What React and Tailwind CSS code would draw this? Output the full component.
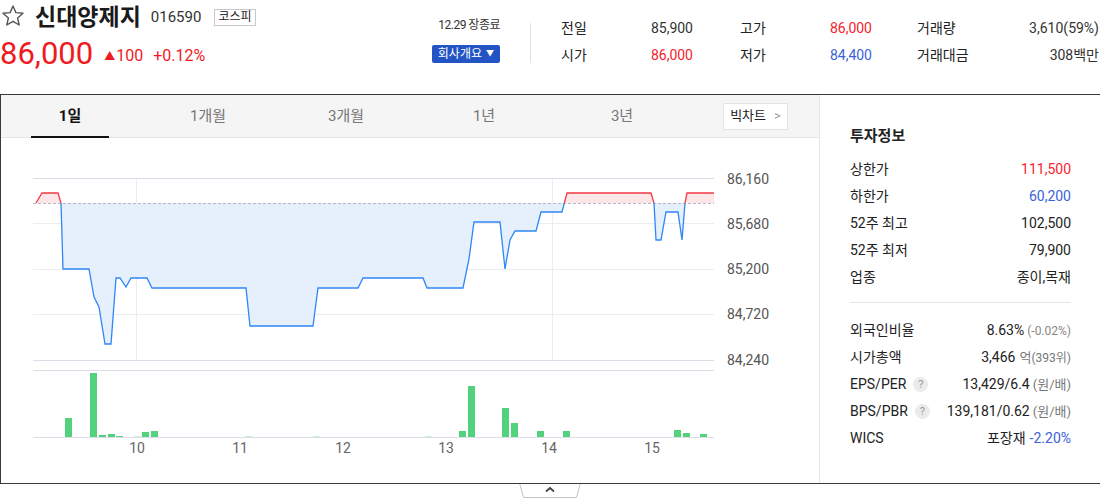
import React from "react";

const F = { fontFamily: 'Roboto, "Noto Sans CJK KR", sans-serif' };

const pts = [
  [36, 203], [42, 193], [58, 193], [61, 203], [63, 269], [89, 269], [94, 297], [99, 307], [105, 344], [111, 344],
  [116, 278], [120, 278], [126, 287], [131, 278], [147, 278], [152, 288], [246, 288], [250, 326], [313, 326],
  [318, 288], [358, 288], [363, 278], [423, 278], [427, 288], [463, 288], [469, 259], [474, 222], [500, 222],
  [505, 269], [510, 240], [515, 231], [536, 231], [541, 212], [562, 212], [567, 193], [651, 193], [654, 203],
  [656, 240], [661, 240], [666, 212], [678, 212], [682, 240], [685, 203], [687, 193], [714, 193],
];
const line = pts.map((p) => p.join(",")).join(" ");
const area = `36,203 ${line} 714,203`;

const bars = [
  [65, 418], [90, 373], [99, 435], [108, 434], [116, 436], [142, 432], [151, 431],
  [459, 431], [468, 386], [502, 408], [511, 423], [537, 431], [563, 431], [674, 430], [683, 433], [700, 434],
];
const faint = [134, 245, 313, 425];

const priceLabels = [["86,160", 179], ["85,680", 224], ["85,200", 269], ["84,720", 314], ["84,240", 360]];
const timeLabels = [["10", 137], ["11", 240], ["12", 343], ["13", 446], ["14", 549], ["15", 652]];

function Star() {
  return (
    <svg width="24" height="24" viewBox="0 0 24 24" fill="none" stroke="#555" strokeWidth="1.4" strokeLinejoin="round">
      <polygon points="12,2 14.9,8.6 22,9.3 16.6,14 18.2,21 12,17.3 5.8,21 7.4,14 2,9.3 9.1,8.6" />
    </svg>
  );
}

function Q() {
  return (
    <span className="ml-[7px] inline-flex h-[15px] w-[15px] items-center justify-center rounded-full bg-[#ebebeb] text-[11px] leading-none text-[#999]">?</span>
  );
}

function Row({ label, children }) {
  return (
    <div className="flex h-[27px] items-center justify-between text-[14px] text-[#222]">
      <div className="flex items-center">{label}</div>
      <div className="flex items-center">{children}</div>
    </div>
  );
}

export default function App() {
  const tabs = ["1일", "1개월", "3개월", "1년", "3년"];
  return (
    <div style={F} className="relative h-[499px] w-[1100px] overflow-hidden bg-white">
      {/* header */}
      <div className="flex h-[94px]">
        <div className="w-[420px]">
          <div className="flex h-[34px] items-center">
            <div className="ml-[1px] mt-[-2px]"><Star /></div>
            <span className="ml-[10px] text-[23px] font-bold leading-none text-[#1a1a1a]">신대양제지</span>
            <span className="ml-[10px] text-[15px] leading-none text-[#333]">016590</span>
            <span className="ml-[13px] flex h-[17px] items-center border border-[#c8c8c8] px-[3px] text-[12px] leading-none text-[#222]">코스피</span>
          </div>
          <div className="flex h-[38px] items-center">
            <span className="text-[31px] leading-none text-[#f01b22]">86,000</span>
            <span className="ml-[11px] mt-[6px] text-[11px] leading-none text-[#f01b22]">▲</span>
            <span className="ml-[1px] mt-[6px] text-[16px] leading-none text-[#f01b22]">100</span>
            <span className="ml-[10px] mt-[6px] text-[16px] leading-none text-[#f01b22]">+0.12%</span>
          </div>
        </div>
        <div className="flex w-[80px] flex-col items-end pt-[18px]">
          <span className="text-[12px] leading-[14px] tracking-[-0.5px] text-[#333]">12.29 장종료</span>
          <span className="mt-[13px] flex h-[18px] items-center rounded-[2px] bg-[#2254c4] px-[6px] text-[12px] leading-none text-white">
            회사개요 <span className="ml-[4px] text-[8px]">▼</span>
          </span>
        </div>
        <div className="ml-[30px] mt-[23px] h-[40px] w-px bg-[#e2e2e2]" />
        <div className="ml-[30px] mt-[15px] flex text-[14px]">
          <div className="w-[132px]">
            <div className="flex h-[27px] items-center justify-between"><span className="text-[#222]">전일</span><span className="text-[#333]">85,900</span></div>
            <div className="flex h-[27px] items-center justify-between"><span className="text-[#222]">시가</span><span className="text-[#f5222d]">86,000</span></div>
          </div>
          <div className="ml-[47px] w-[132px]">
            <div className="flex h-[27px] items-center justify-between"><span className="text-[#222]">고가</span><span className="text-[#f5222d]">86,000</span></div>
            <div className="flex h-[27px] items-center justify-between"><span className="text-[#222]">저가</span><span className="text-[#3b62d9]">84,400</span></div>
          </div>
          <div className="ml-[45px] w-[182px]">
            <div className="flex h-[27px] items-center justify-between"><span className="text-[#222]">거래량</span><span className="text-[#333]">3,610(59%)</span></div>
            <div className="flex h-[27px] items-center justify-between"><span className="text-[#222]">거래대금</span><span className="text-[#333]">308백만</span></div>
          </div>
        </div>
      </div>

      {/* main box */}
      <div className="flex h-[390px] border-y border-l border-[#3a3a3a]">
        <div className="w-[818px]">
          <div className="flex h-[43px] items-center border-b border-[#e5e5e5] bg-[#f5f5f5]">
            {tabs.map((t, i) => (
              <div key={t} className="relative flex h-full w-[138px] items-center justify-center">
                <span className={i === 0 ? "text-[15px] font-bold text-[#111]" : "text-[15px] text-[#777]"}>{t}</span>
                {i === 0 && <div className="absolute bottom-[-1px] left-[30px] h-[2px] w-[78px] bg-[#111]" />}
              </div>
            ))}
            <div className="ml-[32px] flex h-[27px] w-[65px] items-center justify-center border border-[#e3e3e3] bg-white text-[13px] text-[#222]">
              빅차트 <span className="ml-[8px] text-[#999]">&gt;</span>
            </div>
          </div>
          <div className="relative h-[345px] w-[818px]">
            <svg width="818" height="345" viewBox="1 138 818 345" className="absolute left-0 top-0">
              <defs>
                <clipPath id="above"><rect x="0" y="100" width="820" height="103" /></clipPath>
                <clipPath id="below"><rect x="0" y="203" width="820" height="200" /></clipPath>
              </defs>
              <line x1="33" y1="178.5" x2="714" y2="178.5" stroke="#d6dde6" />
              {[223.5, 269.5, 314.5].map((y) => (
                <line key={y} x1="33" y1={y} x2="714" y2={y} stroke="#ececec" />
              ))}
              <line x1="33" y1="360.5" x2="714" y2="360.5" stroke="#dcdde8" />
              <line x1="136.5" y1="179" x2="136.5" y2="360" stroke="#ececec" />
              <line x1="552.5" y1="179" x2="552.5" y2="360" stroke="#ececec" />
              <polygon points={area} fill="#e6f0fc" clipPath="url(#below)" />
              <polygon points={area} fill="#fde6e8" clipPath="url(#above)" />
              <line x1="33" y1="203.5" x2="714" y2="203.5" stroke="#b3b8c2" strokeDasharray="3,2" />
              <polyline points={line} fill="none" stroke="#2f86f6" strokeWidth="1.3" clipPath="url(#below)" />
              <polyline points={line} fill="none" stroke="#f23a46" strokeWidth="1.3" clipPath="url(#above)" />
              <line x1="33" y1="370.5" x2="714" y2="370.5" stroke="#dcdde8" />
              {faint.map((x) => (
                <rect key={x} x={x} y="436" width="7" height="1.5" fill="#cdeed7" />
              ))}
              {bars.map(([x, y]) => (
                <rect key={x} x={x} y={y} width="7" height={437 - y} fill="#52d27c" />
              ))}
              <line x1="33" y1="437.5" x2="714" y2="437.5" stroke="#dcdde8" />
            </svg>
            {priceLabels.map(([t, y]) => (
              <div key={t} className="absolute left-[726px] text-[14px] leading-[16px] text-[#555]" style={{ top: y - 138 - 8 }}>{t}</div>
            ))}
            {timeLabels.map(([t, x]) => (
              <div key={t} className="absolute w-[30px] text-center text-[14px] leading-[16px] text-[#666]" style={{ left: x - 1 - 15, top: 448 - 138 - 8 }}>{t}</div>
            ))}
          </div>
        </div>
        <div className="w-[281px] border-l border-[#e5e5e5] pl-[30px] pr-[29px] pt-[31px]">
          <div className="text-[15px] font-bold leading-[20px] text-[#222]">투자정보</div>
          <div className="mt-[10px]">
            <Row label="상한가"><span className="text-[#f5222d]">111,500</span></Row>
            <Row label="하한가"><span className="text-[#3b62d9]">60,200</span></Row>
            <Row label="52주 최고">102,500</Row>
            <Row label="52주 최저">79,900</Row>
            <Row label="업종">종이,목재</Row>
          </div>
          <div className="mt-[11px] h-px bg-[#e5e5e5]" />
          <div className="mt-[14px]">
            <Row label="외국인비율">8.63%<span className="ml-[3px] text-[12px] text-[#888]">(-0.02%)</span></Row>
            <Row label="시가총액">3,466<span className="ml-[4px] text-[13px] text-[#777]">억</span><span className="text-[12px] text-[#777]">(393위)</span></Row>
            <Row label={<>EPS/PER<Q /></>}>13,429/6.4<span className="ml-[3px] text-[13px] text-[#777]">(원/배)</span></Row>
            <Row label={<>BPS/PBR<Q /></>}>139,181/0.62<span className="ml-[3px] text-[13px] text-[#777]">(원/배)</span></Row>
            <Row label="WICS">포장재<span className="ml-[4px] text-[#3b62d9]">-2.20%</span></Row>
          </div>
        </div>
      </div>

      {/* bottom handle */}
      <div className="absolute left-[519px] top-[483px]">
        <svg width="62" height="15" viewBox="0 0 62 15">
          <polygon points="0.5,0 61.5,0 57.5,14.5 4.5,14.5" fill="#fff" stroke="#c4c4c4" />
          <line x1="0" y1="0.5" x2="62" y2="0.5" stroke="#3a3a3a" />
          <polyline points="27,8.5 31,5 35,8.5" fill="none" stroke="#444" strokeWidth="1.8" />
        </svg>
      </div>
    </div>
  );
}
